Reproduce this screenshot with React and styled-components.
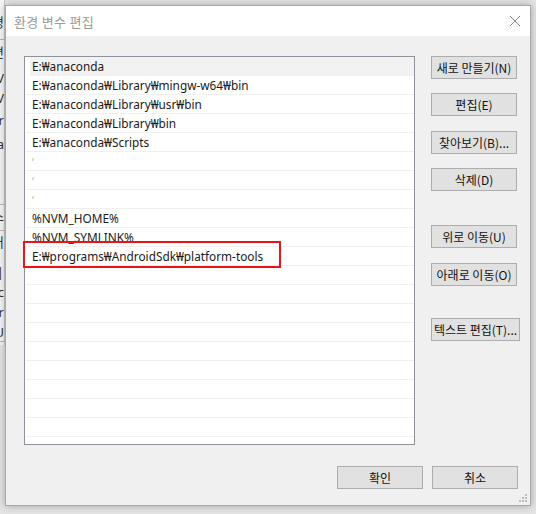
import React from 'react'
import styled, { createGlobalStyle } from 'styled-components'

const Global = createGlobalStyle`
  html, body { margin: 0; padding: 0; }
  body {
    width: 536px;
    height: 514px;
    overflow: hidden;
    background: #e9e9e9;
    font-family: "Noto Sans", "Noto Sans CJK KR", sans-serif;
  }
`

const Desktop = styled.div`
  position: relative;
  width: 536px;
  height: 514px;
  overflow: hidden;
  background: #e4e4e4;
`

const BackWindow = styled.div`
  position: absolute;
  left: -200px;
  top: 0;
  width: 204px;
  height: 345px;
  background: #f6f6f6;
  border-right: 1px solid #c8c8c8;
  overflow: hidden;
`

const BackLine = styled.div`
  position: absolute;
  right: 0;
  top: ${p => p.top}px;
  font-size: 13px;
  line-height: 16px;
  color: ${p => p.color || '#333'};
  white-space: nowrap;
`

const BackRule = styled.div`
  position: absolute;
  left: 0;
  right: 0;
  top: ${p => p.top}px;
  height: 1px;
  background: #b5b5b5;
`

const Dialog = styled.div`
  position: absolute;
  left: 5px;
  top: 5px;
  width: 524px;
  height: 499px;
  border: 1px solid #a8a8a8;
  background: #f0f0f0;
  box-shadow: 0 0 8px rgba(0, 0, 0, 0.28);
  display: flex;
  flex-direction: column;
`

const TitleBar = styled.div`
  height: 30px;
  background: #ffffff;
  display: flex;
  align-items: center;
  justify-content: space-between;
  padding: 0 9px 0 8px;
`

const Title = styled.span`
  font-family: "Noto Sans CJK KR", sans-serif;
  font-size: 13px;
  color: #9a9a9a;
  letter-spacing: 0.3px;
`

const Body = styled.div`
  flex: 1;
  display: flex;
  flex-direction: column;
  padding: 20px 12px 15px 18px;
`

const Main = styled.div`
  display: flex;
  gap: 16px;
`

const ListWrap = styled.div`
  position: relative;
`

const List = styled.div`
  width: 389px;
  height: 387px;
  background: #ffffff;
  border: 1px solid #8f929a;
  overflow: hidden;
`

const Row = styled.div`
  height: 17px;
  padding-top: 1px;
  margin-left: ${p => (p.selected ? 5 : 1)}px;
  border-bottom: 1px solid #f0f0f0;
  background: ${p => (p.selected ? '#f2f2f2' : '#ffffff')};
  padding-left: ${p => (p.selected ? 2 : 6)}px;
  font-size: 11.8px;
  line-height: 17px;
  color: #1a1a1a;
  white-space: nowrap;
`

const Faint = styled.span`
  color: #c4b4a2;
  font-size: 11px;
`

const Highlight = styled.div`
  position: absolute;
  left: -1px;
  top: 185px;
  width: 254px;
  height: 23px;
  border: 2px solid #e8141a;
  pointer-events: none;
`

const Side = styled.div`
  display: flex;
  flex-direction: column;
  align-items: flex-start;
`

const Button = styled.button`
  width: ${p => p.w || 86}px;
  height: 23px;
  margin-top: ${p => p.mt || 0}px;
  padding: 0;
  background: #e1e1e1;
  border: 1px solid #adadad;
  font-family: "Noto Sans CJK KR", sans-serif;
  font-size: 12px;
  color: #111;
  white-space: nowrap;
  cursor: default;
`

const Footer = styled.div`
  display: flex;
  justify-content: flex-end;
  gap: 9px;
  margin-top: 21px;
`

const Grip = styled.svg`
  position: absolute;
  right: 3px;
  bottom: 3px;
`

const paths = [
  'E:₩anaconda',
  'E:₩anaconda₩Library₩mingw-w64₩bin',
  'E:₩anaconda₩Library₩usr₩bin',
  'E:₩anaconda₩Library₩bin',
  'E:₩anaconda₩Scripts',
  null,
  null,
  null,
  '%NVM_HOME%',
  '%NVM_SYMLINK%',
  'E:₩programs₩AndroidSdk₩platform-tools',
]

const back = [
  { top: 14, t: '경' },
  { top: 44, t: '변' },
  { top: 70, t: 'IV' },
  { top: 90, t: 'IV' },
  { top: 112, t: 'Or' },
  { top: 136, t: 'a' },
  { top: 208, t: '스' },
  { top: 234, t: '터' },
  { top: 264, t: 's|' },
  { top: 284, t: 'c' },
  { top: 304, t: 'Or' },
  { top: 324, t: 'IU' },
]

export default function App() {
  const rows = []
  for (let i = 0; i < 20; i++) rows.push(i < paths.length ? paths[i] : '')

  return (
    <Desktop>
      <Global />
      <BackWindow>
        {back.map((b, i) => (
          <BackLine key={i} top={b.top}>{b.t}</BackLine>
        ))}
        <BackRule top={39} />
        <BackRule top={204} />
        <BackRule top={230} />
        <BackRule top={341} />
      </BackWindow>

      <Dialog>
        <TitleBar>
          <Title>환경 변수 편집</Title>
          <svg width="12" height="12" viewBox="0 0 12 12">
            <path d="M1 1 L11 11 M11 1 L1 11" stroke="#8a8a8a" strokeWidth="1" fill="none" />
          </svg>
        </TitleBar>

        <Body>
          <Main>
            <ListWrap>
              <List>
                {rows.map((r, i) => (
                  <Row key={i} selected={i === 0}>
                    {r === null ? <Faint>‘</Faint> : r}
                  </Row>
                ))}
              </List>
              <Highlight />
            </ListWrap>

            <Side>
              <Button>새로 만들기(N)</Button>
              <Button mt={14}>편집(E)</Button>
              <Button mt={15}>찾아보기(B)...</Button>
              <Button mt={14}>삭제(D)</Button>
              <Button mt={34}>위로 이동(U)</Button>
              <Button mt={15}>아래로 이동(O)</Button>
              <Button mt={32} w={89}>텍스트 편집(T)...</Button>
            </Side>
          </Main>

          <Footer>
            <Button>확인</Button>
            <Button>취소</Button>
          </Footer>
        </Body>

        <Grip width="10" height="10" viewBox="0 0 10 10">
          <rect x="8" y="2" width="2" height="2" fill="#bcbcbc" />
          <rect x="5" y="5" width="2" height="2" fill="#bcbcbc" />
          <rect x="8" y="5" width="2" height="2" fill="#bcbcbc" />
          <rect x="2" y="8" width="2" height="2" fill="#bcbcbc" />
          <rect x="5" y="8" width="2" height="2" fill="#bcbcbc" />
          <rect x="8" y="8" width="2" height="2" fill="#bcbcbc" />
        </Grip>
      </Dialog>
    </Desktop>
  )
}
